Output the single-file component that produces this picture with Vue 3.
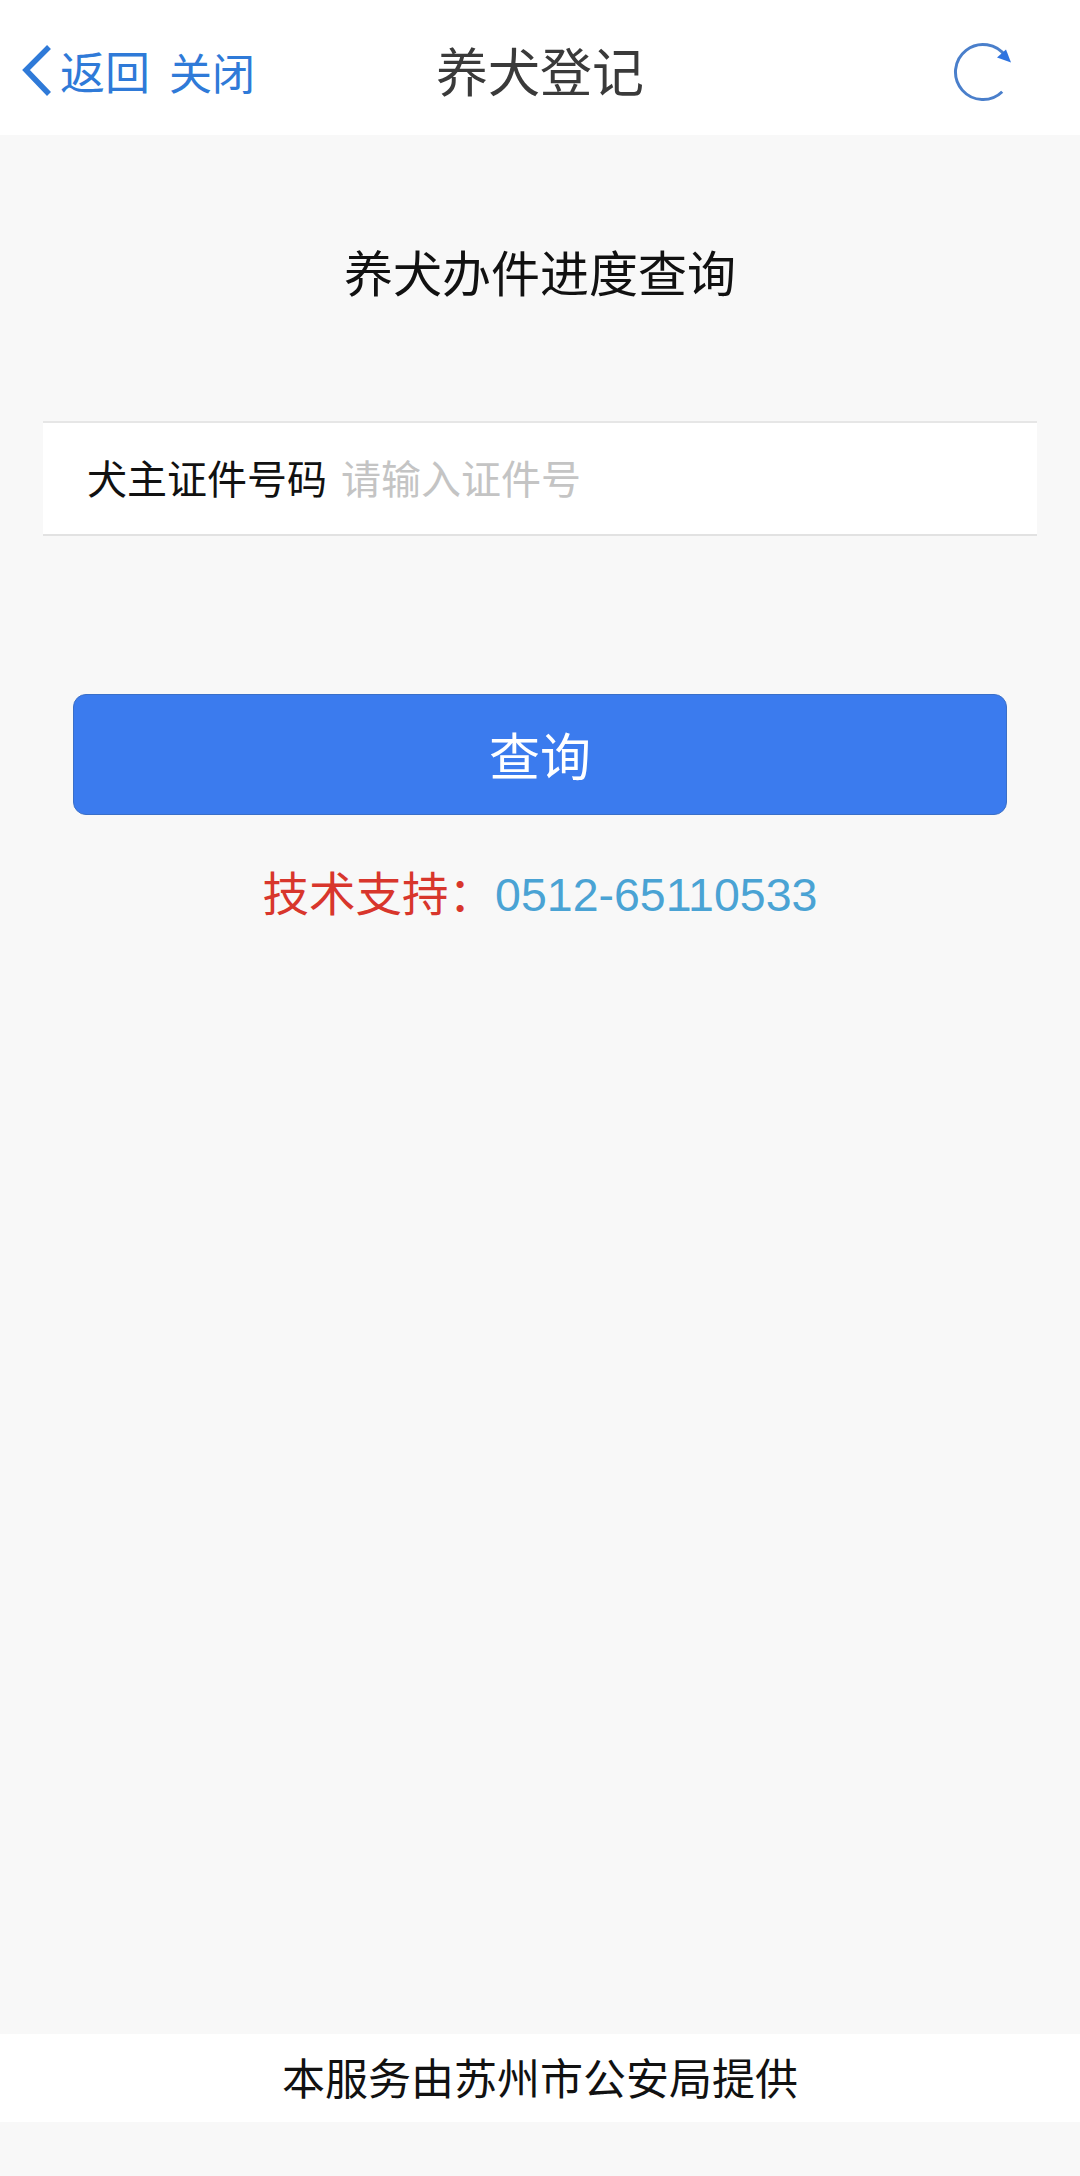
<script setup>
const title = '养犬登记'
</script>

<template>
  <div class="page">
    <header class="nav">
      <div class="nav-left">
        <svg class="chevron" width="34" height="54" viewBox="0 0 34 54">
          <path d="M29 3 L6 26 L29 50" fill="none" stroke="#2f7ad8" stroke-width="5.5" />
        </svg>
        <span class="back">返回</span>
        <span class="close">关闭</span>
      </div>
      <div class="nav-title">{{ title }}</div>
      <div class="nav-right">
        <svg class="refresh" width="60" height="62" viewBox="0 0 60 62">
          <path d="M49.2 50.7 A27.5 27.5 0 1 1 52.6 15.4" fill="none" stroke="#4a7fcb" stroke-width="3" />
          <path d="M58 21.5 L53 8.5 L44 16.5 Z" fill="#2f74e0" />
        </svg>
      </div>
    </header>

    <h1 class="heading">养犬办件进度查询</h1>

    <div class="field">
      <span class="field-label">犬主证件号码</span>
      <span class="field-placeholder">请输入证件号</span>
    </div>

    <button class="submit">查询</button>

    <p class="support">
      <span class="support-label">技术支持：</span><span class="support-phone">0512-65110533</span>
    </p>

    <footer class="provider">本服务由苏州市公安局提供</footer>
  </div>
</template>

<style>
html, body { margin: 0; padding: 0; background: #f8f8f8; }
</style>

<style scoped>
.page {
  width: 1080px;
  height: 2176px;
  background: #f8f8f8;
  display: flex;
  flex-direction: column;
  font-family: "Noto Sans CJK SC", "Noto Sans", sans-serif;
  overflow: hidden;
}
.nav {
  height: 135px;
  flex: none;
  background: #fff;
  display: grid;
  grid-template-columns: 1fr auto 1fr;
  align-items: center;
  padding: 0 20px;
  box-sizing: border-box;
}
.nav-left {
  display: flex;
  align-items: center;
  color: #2f7ad8;
  font-size: 43px;
  line-height: 60px;
  padding-top: 6px;
}
.chevron { flex: none; margin-right: 6px; }
.back { font-size: 45px; margin-right: 19px; }
.nav-title {
  font-size: 52px;
  line-height: 70px;
  color: #3a3a3a;
  padding-top: 4px;
}
.nav-right {
  display: flex;
  justify-content: flex-end;
  padding-right: 47px;
  padding-top: 8px;
}
.heading {
  margin: 101px 0 0;
  font-size: 49px;
  line-height: 70px;
  font-weight: 400;
  color: #111;
  text-align: center;
}
.field {
  margin: 115px 43px 0 43px;
  height: 115px;
  box-sizing: border-box;
  background: #fff;
  border-top: 2px solid #e6e6e6;
  border-bottom: 2px solid #e2e2e2;
  padding-left: 44px;
  padding-bottom: 3px;
  display: flex;
  align-items: center;
  gap: 14px;
  font-size: 40px;
}
.field-label { color: #111; }
.field-placeholder { color: #c4c4c4; }
.submit {
  margin: 158px 73px 0;
  height: 121px;
  flex: none;
  border: 1px solid #3a6fc8;
  border-radius: 13px;
  background: #3b7bee;
  color: #fff;
  font-family: inherit;
  font-size: 51px;
  padding: 0 0 2px;
}
.support {
  margin: 41px 0 0;
  font-size: 46.5px;
  line-height: 70px;
  text-align: center;
}
.support-label { color: #d8362c; }
.support-phone {
  color: #4aa3d4;
  font-family: "Liberation Sans", sans-serif;
}
.provider {
  margin-top: auto;
  margin-bottom: 54px;
  height: 88px;
  flex: none;
  background: #fff;
  text-align: center;
  font-size: 43px;
  line-height: 85px;
  color: #111;
}
</style>
